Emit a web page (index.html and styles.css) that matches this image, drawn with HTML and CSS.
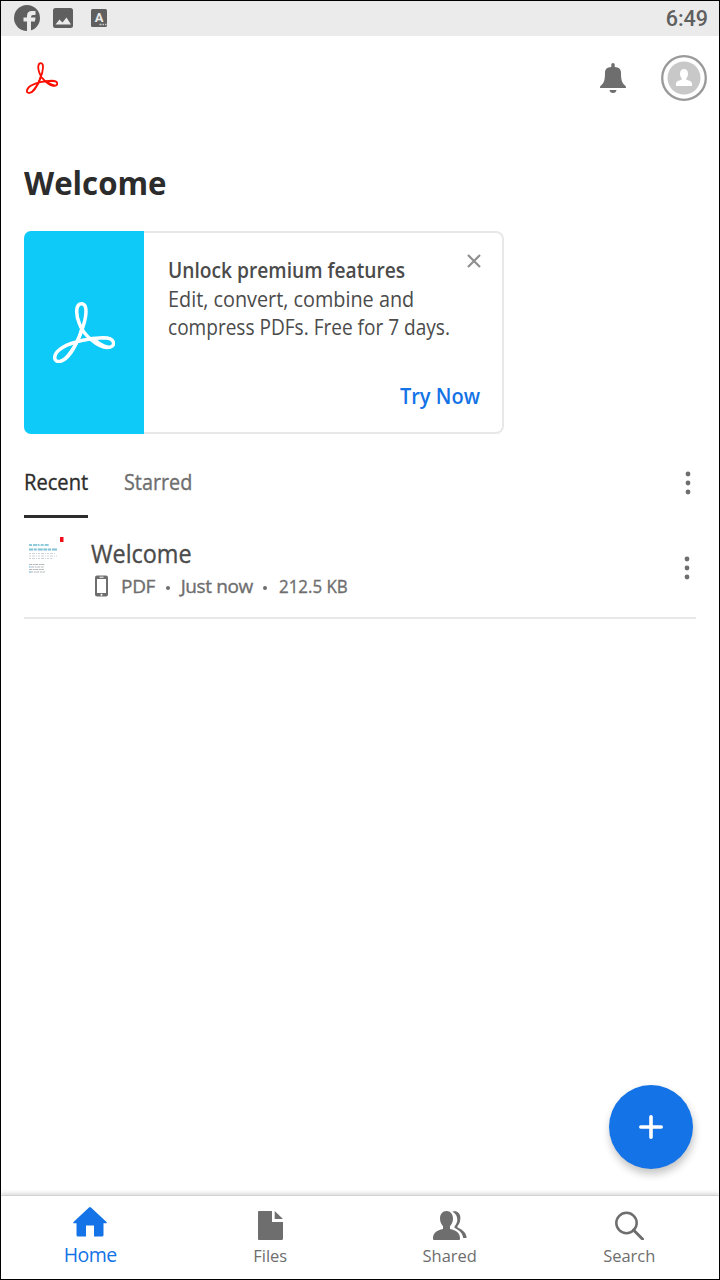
FILE: index.html
```html
<!DOCTYPE html>
<html lang="en">
<head>
<meta charset="UTF-8">
<meta name="viewport" content="width=device-width, initial-scale=1.0">
<title>Adobe Acrobat</title>
<link rel="stylesheet" href="styles.css">
</head>
<body>
<svg width="0" height="0" class="defs">
    <symbol id="acrobat" viewBox="0 0 186 182">
        <path d="M86 5 C67 5 68 38 79 64 C90 98 135 136 163 136 C190 136 190 107 150 107 C110 108 60 118 30 135 C-4 155 1 180 20 178 C45 174 69 130 84 90 C101 48 106 5 86 5 Z" fill="none" stroke="currentColor" stroke-width="10.500"/>
        <path d="M84 66 L94 76 Q80 128 42 170 L28 172 Q60 140 76 100z" fill="currentColor"/>
        <path d="M125 113 Q140 129 166 136" fill="none" stroke="currentColor" stroke-width="11"/>
    </symbol>
    <symbol id="dots" viewBox="0 0 6 24">
        <circle cx="3" cy="3" r="2.4"/>
        <circle cx="3" cy="12" r="2.4"/>
        <circle cx="3" cy="21" r="2.4"/>
    </symbol>
</svg>

<div class="screen">
    <div class="status-bar">
        <svg width="26" height="26" viewBox="0 0 26 26">
            <circle cx="13" cy="13" r="13" fill="#5f5f5f"/>
            <path d="M13 26V16.500H9.500v-4H13V11q0-5 5-5h3.500v4H19q-2 0-2 2v.5h4.500l-.6 4H17V26z" fill="#ebebeb"/>
        </svg>
        <svg class="picture" width="20" height="20" viewBox="0 0 20 20">
            <rect width="20" height="20" rx="2.500" fill="#5f5f5f"/>
            <path d="M2.500 16.500l4-5 3 3 4-5 4.500 7z" fill="#ebebeb"/>
        </svg>
        <svg class="letter" width="16" height="18" viewBox="0 0 16 18">
            <rect width="16" height="18" rx="1.500" fill="#5f5f5f"/>
            <text x="8" y="13" text-anchor="middle" class="letter-a">A</text>
            <path d="M8.500 15.500h2M11.500 15.500h1.500M14 15.500h1.500" stroke="#ccc" stroke-width="1.300"/>
        </svg>
        <span class="clock">6:49</span>
    </div>

    <header class="top-bar">
        <svg class="logo" width="32" height="32"><use href="#acrobat"/></svg>
        <svg class="bell" width="26" height="30" viewBox="0 0 26 30" fill="#6e6e6e">
            <path d="M11.300 4V1.500q0-1.500 1.700-1.500t1.700 1.500V4C19 4.300 21 6 21 10c0 7 1 10 4 12.500.8.700 1 1.300 1 2.500H0c0-1.200.2-1.800 1-2.500C4 20 5 17 5 10c0-4 2-5.700 6.300-6z"/>
            <path d="M9.500 27h7q-.5 3-3.500 3t-3.500-3z"/>
        </svg>
        <svg class="avatar" width="48" height="48" viewBox="0 0 48 48">
            <circle cx="24" cy="24" r="21.800" fill="#fff" stroke="#999" stroke-width="2.300"/>
            <circle cx="24" cy="24" r="16.500" fill="#c8c8c8"/>
            <path d="M24 15c2.500 0 4 2 4 4.700 0 2-.8 3.600-1.700 4.500v1.600c3.400.8 5.700 1.700 5.700 4.200v2H16v-2c0-2.500 2.300-3.400 5.700-4.200v-1.600c-.9-.9-1.700-2.500-1.700-4.500 0-2.700 1.500-4.700 4-4.700z" fill="#fff"/>
        </svg>
    </header>

    <main class="content">
        <h1>Welcome</h1>

        <section class="promo">
            <div class="promo-art">
                <svg width="62" height="61"><use href="#acrobat"/></svg>
            </div>
            <div class="promo-body">
                <div class="promo-title">
                    <h2>Unlock premium features</h2>
                    <svg class="close" width="14" height="14" viewBox="0 0 14 14">
                        <path d="M1 1l12 12M13 1L1 13" stroke="#8e8e8e" stroke-width="2.200"/>
                    </svg>
                </div>
                <p class="line-one">Edit, convert, combine and</p>
                <p class="line-two">compress PDFs. Free for 7 days.</p>
                <a class="try">Try Now</a>
            </div>
        </section>

        <div class="tabs">
            <div class="tab active"><span>Recent</span></div>
            <div class="tab"><span>Starred</span></div>
            <svg class="more" width="6" height="24"><use href="#dots"/></svg>
        </div>

        <div class="file">
            <svg class="thumb" width="40" height="40" viewBox="0 0 40 40">
                <rect x="36" y="1" width="3.500" height="5" fill="#f20d1b"/>
                <g fill="none" stroke-width="2" opacity=".8">
                    <path d="M5 9h20" stroke="#73bfd5" stroke-dasharray="3 1 4 .6 2 1"/>
                    <path d="M5 13.500h28" stroke="#62b4cc" stroke-dasharray="4 .7 3 1 5 .6"/>
                </g>
                <g fill="none" stroke="#d0d3d5" stroke-width="1" stroke-dasharray="2 1 3 1 1 1">
                    <path d="M5 17.500h27M5 20h28M5 22.500h23"/>
                </g>
                <g fill="none" stroke="#b2b7ba" stroke-width="1" stroke-dasharray="3 .7 2 .5">
                    <path d="M5 28.500h16M7 31h13M5 33.500h15M6 36h15"/>
                </g>
                <path d="M5 31h1.500M5 36h1.500" stroke="#4ab5df"/>
            </svg>
            <div class="file-info">
                <h3>Welcome</h3>
                <div class="meta">
                    <svg width="13" height="22" viewBox="0 0 13 22">
                        <rect width="13" height="21" y=".5" rx="2" fill="#6e6e6e"/>
                        <path d="M2 4h9v14H2z" fill="#fff"/>
                        <path d="M4.500 2.200h4" stroke="#fff"/>
                        <circle cx="6.500" cy="19.800" r="1" fill="#fff"/>
                    </svg>
                    <span class="type">PDF</span>
                    <i class="dot"></i>
                    <span class="when">Just now</span>
                    <i class="dot"></i>
                    <span class="size">212.5 KB</span>
                </div>
            </div>
            <svg class="more" width="6" height="24"><use href="#dots"/></svg>
        </div>
    </main>

    <div class="fab">
        <svg width="24" height="24" viewBox="0 0 24 24">
            <path d="M12 1.800v20.400M1.800 12h20.400" stroke="#fff" stroke-width="3.600" stroke-linecap="round"/>
        </svg>
    </div>

    <nav class="nav">
        <div class="nav-item active">
            <svg width="34" height="30" viewBox="0 0 34 30">
                <path d="M16 .5q1-.8 2 0L33.500 15q.7 1-.5 1.300H30.500V28q0 1.500-1.500 1.500h-8V18.500H13V29.500H5Q3.500 29.500 3.500 28V16.300H1Q-.2 16 .5 15z"/>
            </svg>
            <span>Home</span>
        </div>
        <div class="nav-item">
            <svg width="25" height="29" viewBox="0 0 25 29">
                <path d="M1 0h13v11h11v16.500q0 1.500-1.500 1.500H1q-1 0-1-1V1q0-1 1-1z"/>
                <path d="M16.700 0L25 8H16.700z"/>
            </svg>
            <span>Files</span>
        </div>
        <div class="nav-item">
            <svg width="34" height="29" viewBox="0 0 34 29">
                <path d="M13.500 0c4 0 6.500 3.300 6.500 7.500 0 3.500-1.500 6.200-3 7.700v2.800c6 1 10 4 10 9V28q0 1-1 1H1q-1 0-1-1v-1c0-5 4-8 10-9v-2.800C8.500 13.700 7 11 7 7.500 7 3.300 9.500 0 13.500 0z"/>
                <path d="M19.500 .7C23.500-1 28 2 27.300 8c-.2 3-1 5-2.800 7v1.500c4 1.700 9.500 5.500 9 10.500h-3.300c-.5-5-4-8-8.700-10.300v-1.200c4.500-5 3.500-12-2-14.800z"/>
            </svg>
            <span>Shared</span>
        </div>
        <div class="nav-item">
            <svg width="29" height="29" viewBox="0 0 29 29">
                <circle cx="11.500" cy="12" r="10.200" fill="none" stroke="#6e6e6e" stroke-width="2.500"/>
                <path d="M18.500 19l9 9" stroke="#6e6e6e" stroke-width="3" stroke-linecap="round"/>
            </svg>
            <span>Search</span>
        </div>
    </nav>
</div>
</body>
</html>
```
FILE: styles.css
```css
body {
    margin: 0;
    font-family: "Open Sans", "Noto Sans", sans-serif;
    color: #4b4b4b;
    background-color: #fff;
}

* {
    box-sizing: border-box;
}

h1, h2, h3, p {
    margin: 0;
    white-space: nowrap;
    transform-origin: left;
}

svg {
    display: block;
    flex-shrink: 0;
}

.defs {
    position: absolute;
}

.screen {
    position: relative;
    display: flex;
    flex-direction: column;
    width: 720px;
    height: 1280px;
    border: 1px solid #000;
}

.status-bar {
    display: flex;
    align-items: center;
    height: 35px;
    padding: 0 11px 0 13px;
    background-color: #ebebeb;
}

.status-bar svg:first-child {
    margin-bottom: 1px;
}

.picture {
    margin: 0 0 1px 13px;
}

.letter {
    margin: 0 0 1px 18px;
}

.letter-a {
    font: bold 13px Roboto, sans-serif;
    fill: #ebebeb;
}

.clock {
    margin-left: auto;
    font: 500 21.5px Roboto, sans-serif;
    color: #5f5f5f;
}

.top-bar {
    display: flex;
    align-items: center;
    height: 84px;
    padding: 0 11px 0 25px;
}

.logo {
    color: #fa0f00;
}

.bell {
    margin-left: auto;
}

.avatar {
    margin-left: 34px;
}

.content {
    flex: 1;
    padding: 38px 23px 0;
}

h1 {
    height: 73px;
    font-size: 33px;
    line-height: 50px;
    font-weight: 700;
    color: #2c2c2c;
    transform: scaleX(0.945);
}

.promo {
    display: flex;
    width: 480px;
    height: 203px;
    border: 2px solid #e8e8e8;
    border-left: 0;
    border-radius: 8px;
}

.promo-art {
    display: flex;
    flex-shrink: 0;
    align-items: center;
    justify-content: center;
    width: 120px;
    margin: -2px 0;
    border-radius: 7px 0 0 7px;
    background-color: #0dcaf9;
    color: #fff;
}

.promo-body {
    flex: 1;
    min-width: 0;
    display: flex;
    flex-direction: column;
    align-items: flex-start;
    padding: 21px 22px 20px 24px;
}

.promo-title {
    display: flex;
    width: 100%;
    height: 30px;
}

.close {
    margin-left: auto;
    margin-right: -1px;
}

h2 {
    width: 266px;
    font-size: 21.5px;
    line-height: 32px;
    font-weight: 600;
    transform: scaleX(0.893);
}

p {
    font-size: 22px;
    line-height: 28px;
}

.line-one {
    transform: scaleX(0.901);
}

.line-two {
    transform: scaleX(0.866);
}

.try {
    margin-top: auto;
    margin-bottom: 2px;
    align-self: flex-end;
    font-size: 22px;
    line-height: 30px;
    font-weight: 600;
    color: #1473e6;
    transform: scaleX(0.91);
    transform-origin: right;
}

.tabs {
    display: flex;
    height: 98px;
    padding-top: 30px;
    gap: 36px;
}

/* strokes thicken the regular weight to a medium */
.tab, h3, .meta {
    -webkit-text-stroke: 0.35px currentColor;
}

.tab {
    width: 64px;
    height: 54px;
    font-size: 22px;
    line-height: 34px;
    color: #6e6e6e;
}

.tab span {
    display: inline-block;
    transform: scaleX(0.9);
    transform-origin: left;
}

.tab.active {
    color: #2c2c2c;
    border-bottom: 3px solid #2c2c2c;
}

.tab.active span {
    transform: scaleX(0.915);
}

.more {
    margin-left: auto;
    fill: #6e6e6e;
}

.tabs .more {
    margin-top: 7px;
    margin-right: 5px;
}

.file {
    display: flex;
    height: 87px;
    border-bottom: 2px solid #e8e8e8;
}

.thumb {
    margin-top: 4px;
}

.file-info {
    margin: 4px 0 0 27px;
}

h3 {
    width: 107px;
    font-size: 25px;
    line-height: 34px;
    font-weight: 400;
    transform: scaleX(0.935);
}

.meta {
    display: flex;
    align-items: center;
    margin-left: 4px;
    height: 32px;
    font-size: 19px;
    line-height: 30px;
    color: #6e6e6e;
}

.type {
    margin-left: 13px;
    letter-spacing: -0.3px;
}

.when {
    letter-spacing: -0.4px;
}

.size {
    margin-left: 1px;
    transform: scaleX(0.89);
    transform-origin: left;
}

.dot {
    width: 4px;
    height: 4px;
    margin: 3px 11px 0 10.5px;
    border-radius: 50%;
    background-color: #6e6e6e;
}

.file .more {
    margin-top: 24px;
    margin-right: 6px;
}

.fab {
    position: absolute;
    left: 608px;
    top: 1084px;
    display: flex;
    align-items: center;
    justify-content: center;
    width: 84px;
    height: 84px;
    border-radius: 50%;
    background-color: #1473e6;
    box-shadow: 1px 5px 8px rgba(0, 0, 0, 0.24);
}

.nav {
    display: grid;
    grid-template-columns: repeat(4, 1fr);
    height: 84px;
    background-color: #fff;
    border-top: 1px solid #d2d2d2;
    box-shadow: 0 -2px 4px rgba(0, 0, 0, 0.14);
}

.nav-item {
    display: flex;
    flex-direction: column;
    align-items: center;
    padding-top: 15px;
    font-size: 16.5px;
    line-height: 22px;
    fill: #6e6e6e;
    color: #6e6e6e;
}

.nav-item.active {
    padding-top: 11px;
    padding-right: 1px;
    font-size: 19.5px;
    line-height: 26px;
    letter-spacing: -0.5px;
    fill: #1473e6;
    color: #1473e6;
}

.nav-item span {
    margin-top: 5px;
}
```
